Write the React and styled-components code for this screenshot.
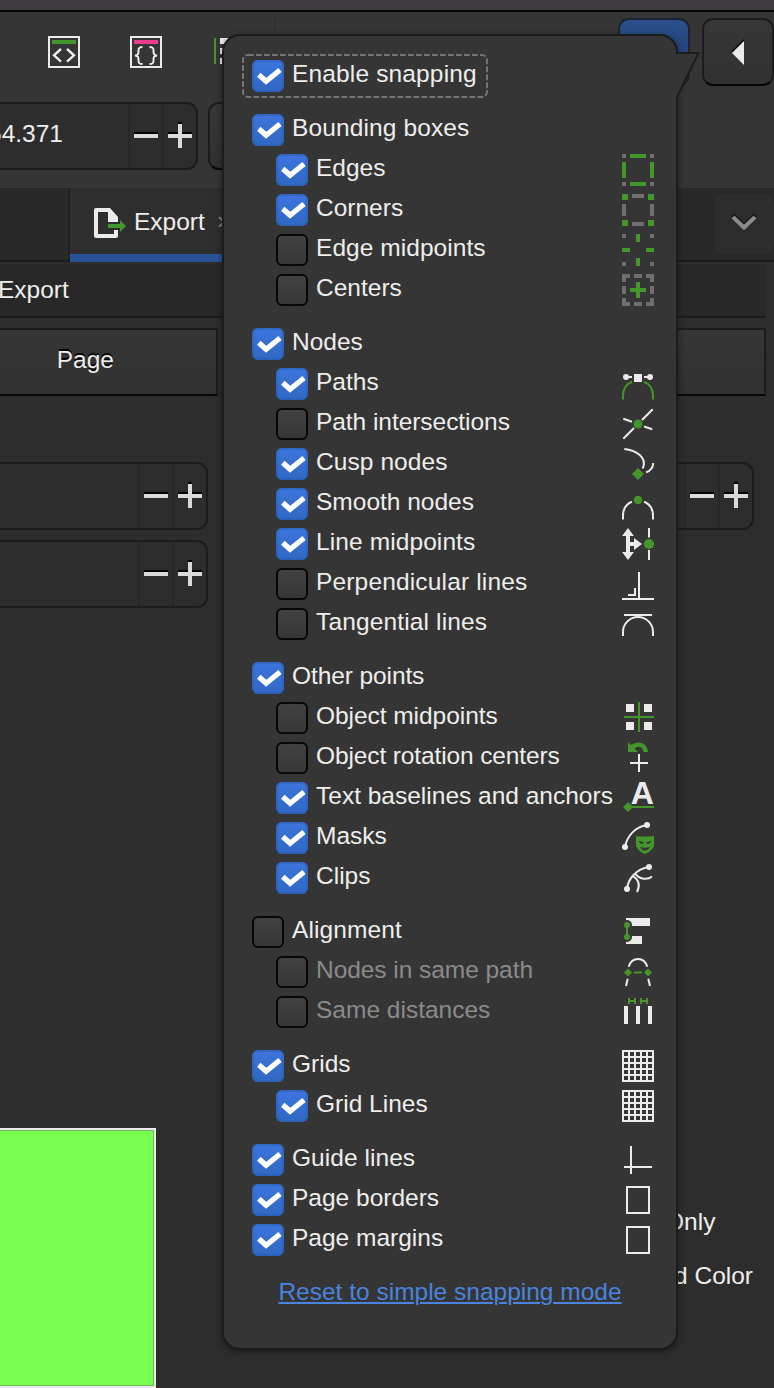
import React from "react";
import styled, { createGlobalStyle, css } from "styled-components";

const GREEN = "#44962c";
const GRAY = "#6f6f6f";
const WHITE = "#ebebeb";
const EDGE = "#1c1c1c";

const GlobalStyle = createGlobalStyle`
  * { box-sizing: border-box; }
  body {
    margin: 0;
    background: #2d2d2d;
    color: #eeeeec;
    font-family: "Liberation Sans", Arial, sans-serif;
    font-size: 24.5px;
    line-height: 28px;
    overflow: hidden;
  }
  svg { display: block; flex: none; overflow: visible; }
`;

/* ---------- window behind the popover ---------- */

const Window = styled.div`
  position: relative;
  display: flex;
  flex-direction: column;
  width: 774px;
  height: 1388px;
  overflow: hidden;
  white-space: nowrap;
`;

const TitleStrip = styled.div`
  height: 12px;
  background: #3c393f;
  border-bottom: 2px solid #060606;
`;

const Toolbar = styled.div`
  display: flex;
  align-items: flex-start;
  height: 90px;
  padding: 6px 0 0 48px;
  background: #353535;
`;

const ToolIcons = styled.div`
  display: flex;
  gap: 50px;
  padding-top: 18px;
`;

const Separator = styled.div`
  width: 2px;
  height: 68px;
  margin-left: 30px;
  background: #303030;
`;

const ToolButtons = styled.div`
  display: flex;
  gap: 12px;
  margin-left: auto;
`;

const ToolButton = styled.div`
  display: flex;
  align-items: center;
  justify-content: center;
  width: 72px;
  height: 68px;
  border: 2px solid ${EDGE};
  border-bottom-color: #060606;
  border-radius: 11px;
  background: linear-gradient(#373737, #313131);
  ${(p) => p.$active && css`
    border-color: #1b2330;
    background: linear-gradient(#2a4f8c, #1f3a66);
  `}
`;

const OptionsRow = styled.div`
  display: flex;
  gap: 10px;
  height: 86px;
  background: #353535;
`;

const SpinBox = styled.div`
  display: flex;
  width: ${(p) => p.$w}px;
  height: 68px;
  border: 2px solid ${EDGE};
  border-left: 0;
  border-radius: 0 11px 11px 0;
  background: #2d2d2d;
  overflow: hidden;
`;

const SpinValue = styled.div`
  flex: 1;
  min-width: 0;
  display: flex;
  justify-content: flex-end;
  padding: 16px 65px 0 0;
`;

const Step = styled.div`
  display: flex;
  align-items: flex-start;
  justify-content: center;
  width: 34px;
  padding-top: 16px;
  border-left: 2px solid #282828;
`;

const OptionButton = styled.div`
  width: 90px;
  height: 68px;
  border: 2px solid ${EDGE};
  border-bottom-color: #060606;
  border-radius: 11px;
  background: linear-gradient(#363636, #313131);
`;

const TabBar = styled.div`
  display: flex;
  height: 74px;
  background: #292929;
  border-bottom: 2px solid ${EDGE};
`;

const TabSpace = styled.div`
  width: 70px;
  border-right: 2px solid #222;
`;

const Tab = styled.div`
  display: flex;
  align-items: flex-start;
  gap: 8px;
  width: 180px;
  height: 74px;
  padding: 20px 0 0 24px;
  background: #2e2e2e;
  border-bottom: 8px solid #2a5298;
`;

const TabClose = styled.span`
  margin-left: 4px;
  color: #8a8a8a;
`;

const TabMenu = styled.div`
  display: flex;
  align-items: center;
  justify-content: center;
  width: 60px;
  height: 60px;
  margin: 6px 0 0 auto;
  border-radius: 11px;
  background: #2d2d2d;
`;

const PanelHeader = styled.div`
  width: 766px;
  height: 54px;
  margin-top: 2px;
  padding-top: 12px;
  background: #282828;
  border-bottom: 2px solid ${EDGE};
  text-indent: -2px;
`;

const Segments = styled.div`
  display: flex;
  justify-content: space-between;
  width: 766px;
  margin-top: 10px;
`;

const Segment = styled.div`
  display: flex;
  justify-content: flex-end;
  width: ${(p) => p.$w}px;
  height: 68px;
  padding: 16px 102px 0 0;
  border: 2px solid ${EDGE};
  border-left: 0;
  border-bottom-color: #060606;
  background: linear-gradient(#363636, #313131);
  text-shadow: 0 -2px 0 #000;
`;

const Fields = styled.div`
  display: grid;
  grid-template-columns: 208px 500px;
  gap: 10px 46px;
  margin-top: 66px;
`;

const Lower = styled.div`
  display: flex;
  justify-content: space-between;
  margin-top: 520px;
`;

const Preview = styled.div`
  width: 156px;
  height: 260px;
  border: 2px solid ${WHITE};
  border-left: 0;
  background: #79ff4f;
  box-shadow: inset -1px 1px 0 #71b45c, inset 0 -1px 0 #71b45c;
`;

const Choices = styled.div`
  display: flex;
  flex-direction: column;
  gap: 26px;
  width: 100px;
  padding-top: 80px;
`;

const Choice = styled.div`
  margin-left: ${(p) => p.$shift || 0}px;
`;

/* ---------- popover ---------- */

const Popover = styled.div`
  position: absolute;
  left: 222px;
  top: 34px;
  width: 456px;
  height: 1316px;
  padding: 24px 22px 0 28px;
  border: 2px solid ${EDGE};
  border-radius: 18px;
  background: #353535;
  box-shadow: 0 2px 7px rgba(0, 0, 0, 0.42);
`;

const Tail = styled.svg`
  position: absolute;
  left: 450px;
  top: 14px;
`;

const Groups = styled.div`
  display: flex;
  flex-direction: column;
  gap: 22px;
`;

const Group = styled.div`
  display: flex;
  flex-direction: column;
  gap: 8px;
`;

const Row = styled.div`
  position: relative;
  display: flex;
  gap: 8px;
  height: 32px;
  padding-left: ${(p) => (p.$sub ? 24 : 0)}px;
`;

const Label = styled.div`
  flex: 1;
  min-width: 0;
  color: ${(p) => (p.$muted ? "#8b8b8b" : "#eeeeec")};
  letter-spacing: ${(p) => p.$track || 0}px;
`;

const CheckBox = styled.div`
  flex: none;
  width: 32px;
  height: 32px;
  border-radius: 6px;
  ${(p) => p.$on
    ? css`
        background: linear-gradient(#3c75dd, #3167c3);
        box-shadow: inset 0 0 0 2px rgba(38, 88, 170, 0.4);
      `
    : css`
        border: 2px solid #070707;
        background: linear-gradient(#414141, #373737);
      `}
`;

const FocusRing = styled.svg`
  position: absolute;
  left: -10px;
  top: -6px;
`;

const ResetLink = styled.a`
  display: block;
  margin: 22px 6px 0 0;
  color: #4a84de;
  text-align: center;
  text-decoration: underline;
  text-decoration-thickness: 2px;
  text-underline-offset: 2px;
`;

/* ---------- icons ---------- */

const Icon = ({ children, w = 32, h = 32 }) => (
  <svg width={w} height={h} viewBox={`0 0 ${w} ${h}`} fill="none">{children}</svg>
);
const G = (p) => <path fill={GREEN} {...p} />;
const W = (p) => <path fill={WHITE} {...p} />;
const Y = (p) => <path fill={GRAY} {...p} />;
const Line = ({ c = WHITE, ...p }) => <path stroke={c} strokeWidth="2" {...p} />;

const SHOULDERS = "M1 31.5V28C1 21 4 16 10 13.7M31 31.5V28C31 21 28 16 22 13.7";
const DOTS = "M0 0h4v4h-4zM28 0h4v4h-4zM0 28h4v4h-4zM28 28h4v4h-4z";
const HOLES = [2, 8, 14, 20, 26];

const icons = {
  edges: <><Y d={DOTS} /><G d="M8 0h16v4H8zM8 28h16v4H8zM0 8h4v16H0zM28 8h4v16h-4z" /></>,
  corners: <><G d="M0 0h6v6H0zM26 0h6v6h-6zM0 26h6v6H0zM26 26h6v6h-6z" /><Y d="M10 0h12v4H10zM10 28h12v4H10zM0 10h4v12H0zM28 10h4v12h-4z" /></>,
  edgeMid: <><Y d={DOTS} /><G d="M14 0h4v8h-4zM14 24h4v8h-4zM0 14h8v4H0zM24 14h8v4h-8z" /></>,
  centers: <><Y d="M0 0h8v4H4v4H0zM24 0h8v8h-4V4h-4zM0 24h4v4h4v4H0zM28 24h4v8h-8v-4h4zM12 0h8v4h-8zM12 28h8v4h-8zM0 12h4v8H0zM28 12h4v8h-4z" /><G d="M14 8h4v6h6v4h-6v6h-4v-6H8v-4h6z" /></>,
  paths: <><Line c={GREEN} d={SHOULDERS} /><Line d="M4 9h6M22 9h6" /><circle cx="4" cy="9" r="3" fill={WHITE} /><circle cx="28" cy="9" r="3" fill={WHITE} /><W d="M12 6h8v8h-8z" /></>,
  intersect: <><Line d="M1.3 30.7L12 20M20 12L30.7 1.3M1.3 10.7L10 13.7M22 18.5L30.3 21.3" /><circle cx="16" cy="16" r="4.5" fill={GREEN} /></>,
  cusp: <><Line d="M2.3 1C13 2 26 9 20.7 20.5M24 24.4Q31 22 31.2 15" /><G d="M16 20l6 6-6 6-6-6z" /></>,
  smooth: <><Line d={SHOULDERS} /><circle cx="16" cy="12" r="4.2" fill={GREEN} /></>,
  lineMid: <><W d="M6 0l6 8H8v6h4v-4l8 6-8 6v-4H8v6h4l-6 8-6-8h4V8H0z" /><Line d="M27 0v9.5M27 22v10" /><circle cx="27" cy="16" r="5" fill={GREEN} /></>,
  perp: <W d="M16 4h2v26h14v2H0v-2h16zM12 20h2v8H6v-2h6z" />,
  tangent: <Line d="M2 7h28M1 28V24A15 15 0 0 1 31 24V28" />,
  objMid: <><W d="M4 2h8v8H4zM22 2h8v8h-8zM4 20h8v8H4zM22 20h8v8h-8z" /><G d="M16 0h2v14h14v2H18v14h-2V16H2v-2h14z" /></>,
  rotate: <><G d="M6 0L9 3C15-1.5 25-.5 26 10h-4.500C21 4 16 3.500 12.500 6.500L16 10H6z" /><W d="M16 12h2v8h8v2h-8v8h-2v-8H8v-2h8z" /></>,
  text: <><text x="8.700" y="22" fill={WHITE} fontFamily="Liberation Sans, sans-serif" fontSize="32" fontWeight="700">A</text><G d="M6 20l4 4h22v2H10l-4 4-5-5z" /></>,
  mask: <><Line d="M3 25C5 14 13 5 25 3" /><circle cx="25" cy="3" r="3" fill={WHITE} /><circle cx="3" cy="25" r="3" fill={WHITE} /><G d="M14 14Q23 15 32 14V24Q30 29 23 32Q16 29 14 24z" /><path d="M17 19.300l4.500 1.500-2 1zM29 19.300l-4.500 1.500 2 1z" fill="#353535" stroke="#353535" /><path d="M18 25q5 1.500 10 0q-2 3.500-5 3.500t-5-3.500z" fill="#353535" /></>,
  clip: <><Line d="M5 27C6 17 14 7 27 5M13 11C17 18 26 18 30 14.500M11 14C17 18 18 24 15 30" /><circle cx="27" cy="5" r="3" fill={WHITE} /><circle cx="5" cy="27" r="3" fill={WHITE} /></>,
  align: <><W d="M4 2h24v8H4zM4 20h16v8H4z" /><circle cx="5" cy="9" r="5" fill="#353535" /><circle cx="5" cy="21" r="5" fill="#353535" /><Line c={GREEN} d="M5 9v12" /><circle cx="5" cy="9" r="3" fill={GREEN} /><circle cx="5" cy="21" r="3" fill={GREEN} /></>,
  samePath: <><Line d="M6.700 10.700C10 .5 22 .5 25.300 10.700M5.700 22.700L4 30M26.300 22.700L28 30" /><G d="M6 12.500l4 4-4 4-4-4zM26 12.500l4 4-4 4-4-4zM12 15.500h8v2h-8z" /></>,
  sameDist: <><W d="M2 10h4v18H2zM14 10h4v18h-4zM26 10h4v18h-4z" /><G d="M6 2h2v2h4V2h2v6h-2V6H8v2H6zM18 2h2v2h4V2h2v6h-2V6h-4v2h-2z" /></>,
  grid: <><W d="M0 0h32v32H0z" />{HOLES.map((y) => HOLES.map((x) => <rect key={`${x}-${y}`} x={x} y={y} width="4" height="4" fill="#353535" />))}</>,
  guide: <W d="M8 2h2v20h20v2H10v6H8v-6H2v-2h6z" />,
  page: <Line d="M5 3h22v26H5z" />,
};

const Check = ({ on }) => (
  <CheckBox $on={on}>
    {on && <Icon><path d="M6.800 14.700L14.100 21.300L28 10" stroke="#fff" strokeWidth="5.2" /></Icon>}
  </CheckBox>
);

const Minus = () => (
  <Icon w={24} h={28}><path d="M0 12h24v2H0z" fill="#000" /><path d="M0 14h24v4H0z" fill="#dadada" /></Icon>
);
const Plus = () => (
  <Icon w={24} h={28}>
    <path d="M0 12h24v2H0zM10 2h4v4h-4z" fill="#000" />
    <path d="M10 4h4v10h10v4H14v10h-4V18H0v-4h10z" fill="#dadada" />
  </Icon>
);

const Spin = ({ w, value }) => (
  <SpinBox $w={w}>
    <SpinValue>{value}</SpinValue>
    <Step><Minus /></Step>
    <Step><Plus /></Step>
  </SpinBox>
);

/* ---------- data: [label, checked, icon, sub, muted, tracking] ---------- */

const groups = [
  [["Enable snapping", 1, null, 0, 0, 0.15]],
  [
    ["Bounding boxes", 1, null, 0, 0, 0.12],
    ["Edges", 1, "edges", 1],
    ["Corners", 1, "corners", 1],
    ["Edge midpoints", 0, "edgeMid", 1, 0, 0.05],
    ["Centers", 0, "centers", 1],
  ],
  [
    ["Nodes", 1],
    ["Paths", 1, "paths", 1],
    ["Path intersections", 0, "intersect", 1, 0, -0.05],
    ["Cusp nodes", 1, "cusp", 1, 0, 0.08],
    ["Smooth nodes", 1, "smooth", 1],
    ["Line midpoints", 1, "lineMid", 1, 0, 0.1],
    ["Perpendicular lines", 0, "perp", 1, 0, 0.16],
    ["Tangential lines", 0, "tangent", 1, 0, 0.14],
  ],
  [
    ["Other points", 1, null, 0, 0, -0.1],
    ["Object midpoints", 0, "objMid", 1, 0, -0.05],
    ["Object rotation centers", 0, "rotate", 1, 0, -0.12],
    ["Text baselines and anchors", 1, "text", 1],
    ["Masks", 1, "mask", 1],
    ["Clips", 1, "clip", 1],
  ],
  [
    ["Alignment", 0, "align", 0, 0, 0.1],
    ["Nodes in same path", 0, "samePath", 1, 1, -0.05],
    ["Same distances", 0, "sameDist", 1, 1],
  ],
  [["Grids", 1, "grid"], ["Grid Lines", 1, "grid", 1]],
  [["Guide lines", 1, "guide", 0, 0, 0.05], ["Page borders", 1, "page"], ["Page margins", 1, "page"]],
];

export default function App() {
  return (
    <Window>
      <GlobalStyle />
      <TitleStrip />
      <Toolbar>
        <ToolIcons>
          <Icon>
            <Line d="M1 1h30v30H1z" /><G d="M4 4h24v4H4z" />
            <Line strokeWidth="2.4" d="M13 13L6 19.300L13 25.700M19 13L26 19.300L19 25.700" />
          </Icon>
          <Icon>
            <Line d="M1 1h30v30H1z" /><path d="M4 4h24v4H4z" fill="#e83e8c" />
            <Line d="M12.500 11C9 11 8.500 12 8.500 14.500C8.500 17.500 8.500 19 5 19.500C8.500 20 8.500 21.500 8.500 24.500C8.500 27 9 28 12.500 28M19.500 11C23 11 23.500 12 23.500 14.500C23.500 17.500 23.500 19 27 19.500C23.500 20 23.500 21.500 23.500 24.500C23.500 27 23 28 19.500 28" />
          </Icon>
          <Icon><G d="M2 2h2v26H2z" /><W d="M8 2h20v6H8zM8 12h14v6H8zM8 22h18v6H8z" /></Icon>
        </ToolIcons>
        <Separator />
        <ToolButtons>
          <ToolButton $active />
          <ToolButton>
            <Icon w={12} h={26}><path d="M12 0L0 12v2L12 2z" fill="#000" /><W d="M12 2v24L0 14z" /></Icon>
          </ToolButton>
        </ToolButtons>
      </Toolbar>
      <OptionsRow>
        <Spin w={198} value="64.371" />
        <OptionButton />
      </OptionsRow>
      <TabBar>
        <TabSpace />
        <Tab>
          <Icon>
            <W d="M0 2Q0 0 2 0H16L24 9V14H14V4H4V26H20V22H24V28Q24 30 22 30H2Q0 30 0 28z" />
            <G d="M14 16h12v-4l6 6-6 6v-4H14z" />
          </Icon>
          <span>Export</span>
          <TabClose>×</TabClose>
        </Tab>
        <TabMenu>
          <Icon w={24} h={18}>
            <path d="M1 0L12 11L23 0" stroke="#111" strokeWidth="4" />
            <path d="M1 2L12 12.500L23 2" stroke="#8c8c8c" strokeWidth="4" />
          </Icon>
        </TabMenu>
      </TabBar>
      <PanelHeader>Export</PanelHeader>
      <Segments>
        <Segment $w={218}>Page</Segment>
        <Segment $w={510} />
      </Segments>
      <Fields>
        <Spin w={208} />
        <Spin w={500} />
        <Spin w={208} />
      </Fields>
      <Lower>
        <Preview />
        <Choices>
          <Choice $shift={-9}>Only</Choice>
          <Choice>d Color</Choice>
        </Choices>
      </Lower>

      <Popover>
        <Groups>
          {groups.map((rows) => (
            <Group key={rows[0][0]}>
              {rows.map(([label, on, icon, sub, muted, track]) => (
                <Row key={label} $sub={sub}>
                  {label === "Enable snapping" && (
                    <FocusRing width="246" height="44">
                      <rect x="1" y="1" width="244" height="42" rx="5" fill="none" stroke="#747474" strokeWidth="2" strokeDasharray="5.8 2.200" />
                    </FocusRing>
                  )}
                  <Check on={!!on} />
                  <Label $muted={muted} $track={track}>{label}</Label>
                  {icon && <Icon>{icons[icon]}</Icon>}
                </Row>
              ))}
            </Group>
          ))}
        </Groups>
        <ResetLink>Reset to simple snapping mode</ResetLink>
        <Tail width="28" height="52">
          <path d="M0 3H25L4 47H0z" fill="#353535" />
          <path d="M2 3H24.500L3 47" fill="none" stroke={EDGE} strokeWidth="2" />
        </Tail>
      </Popover>
    </Window>
  );
}
